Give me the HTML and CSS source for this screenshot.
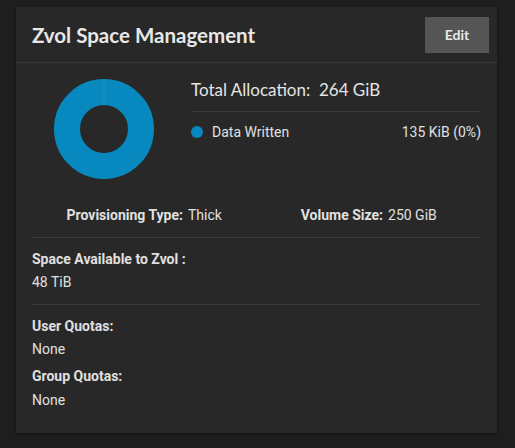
FILE: index.html
```html
<!DOCTYPE html>
<html>
<head>
<meta charset="utf-8">
<link rel="stylesheet" href="styles.css">
</head>
<body>
<div class="page">
  <div class="card">
    <div class="card-header">
      <h3 class="title">Zvol Space Management</h3>
      <button class="btn">Edit</button>
    </div>
    <div class="card-body">
      <div class="chart-row">
        <div class="chart">
          <svg width="100" height="100" viewBox="0 0 100 100">
            <circle cx="50" cy="50" r="37" fill="none" stroke="#0788be" stroke-width="26"/>
            <line x1="50" y1="0" x2="50" y2="26" stroke="#1a94c8" stroke-width="1.2"/>
          </svg>
        </div>
        <div class="info">
          <div class="total">Total Allocation:&nbsp; 264 GiB</div>
          <div class="legend">
            <span class="dot"></span>
            <span class="legend-label">Data Written</span>
            <span class="legend-value">135 KiB (0%)</span>
          </div>
        </div>
      </div>
      <div class="details">
        <div class="detail"><span class="lbl">Provisioning Type:</span><span class="val">Thick</span></div>
        <div class="detail"><span class="lbl">Volume Size:</span><span class="val">250 GiB</span></div>
      </div>
      <div class="section">
        <div class="lbl">Space Available to Zvol :</div>
        <div class="val">48 TiB</div>
      </div>
      <div class="section quotas">
        <div class="lbl">User Quotas:</div>
        <div class="val">None</div>
        <div class="lbl">Group Quotas:</div>
        <div class="val">None</div>
      </div>
    </div>
  </div>
</div>
</body>
</html>
```

FILE: styles.css
```css
html, body {
  margin: 0;
  padding: 0;
  background: #1e1e1e;
}
.page {
  padding: 7px 18px 0 16px;
  height: 448px;
  box-sizing: border-box;
}
.card {
  width: 481px;
  height: 426px;
  background: #282828;
  box-shadow: 0 1px 3px rgba(0,0,0,0.5);
  font-family: Roboto, "Liberation Sans", sans-serif;
  color: #e0e0e0;
}
.card-header {
  height: 56px;
  box-sizing: border-box;
  display: flex;
  align-items: center;
  justify-content: space-between;
  padding: 0 8px 0 16px;
  border-bottom: 1px solid #383838;
}
.title {
  margin: 0;
  font-family: Lato, "Open Sans", sans-serif;
  font-weight: 700;
  font-size: 20.5px;
  color: #e8e8e8;
}
.btn {
  width: 64px;
  height: 36px;
  border: none;
  background: #555555;
  color: #e8e8e8;
  font-family: Lato, "Open Sans", sans-serif;
  font-weight: 700;
  font-size: 14px;
  padding: 0;
}
.card-body {
  padding: 16px 16px 0 16px;
}
.chart-row {
  display: flex;
  height: 100px;
}
.chart {
  width: 144px;
  display: flex;
  justify-content: center;
}
.chart svg { display: block; }
.info {
  margin-left: 15px;
  flex: 1;
}
.total {
  font-family: Lato, "Open Sans", sans-serif;
  font-size: 17px;
  color: #e4e4e4;
  height: 32px;
  line-height: 22px;
  border-bottom: 1px solid #3a3a3a;
}
.legend {
  display: flex;
  align-items: center;
  margin-top: 12px;
  font-size: 14px;
  color: #e0e0e0;
}
.dot {
  width: 12px;
  height: 12px;
  border-radius: 50%;
  background: #0788be;
  margin-right: 9px;
}
.legend-label { flex: 1; }
.details {
  display: flex;
  margin-top: 28px;
  padding-bottom: 14px;
  border-bottom: 1px solid #3a3a3a;
  font-size: 14px;
}
.detail {
  flex: 1;
  text-align: center;
}
.detail .lbl { margin-right: 5px; }
.lbl { font-weight: 700; color: #e0e0e0; }
.val { color: #e0e0e0; }
.section {
  font-size: 14px;
  padding: 13px 0 14px;
  border-bottom: 1px solid #3a3a3a;
}
.section .val { margin-top: 7px; }
.section.quotas { border-bottom: none; }
.quotas .lbl { margin-top: 11px; }
.quotas .lbl:first-child { margin-top: 0; }
.quotas .val:last-child { margin-top: 8px; }
```
